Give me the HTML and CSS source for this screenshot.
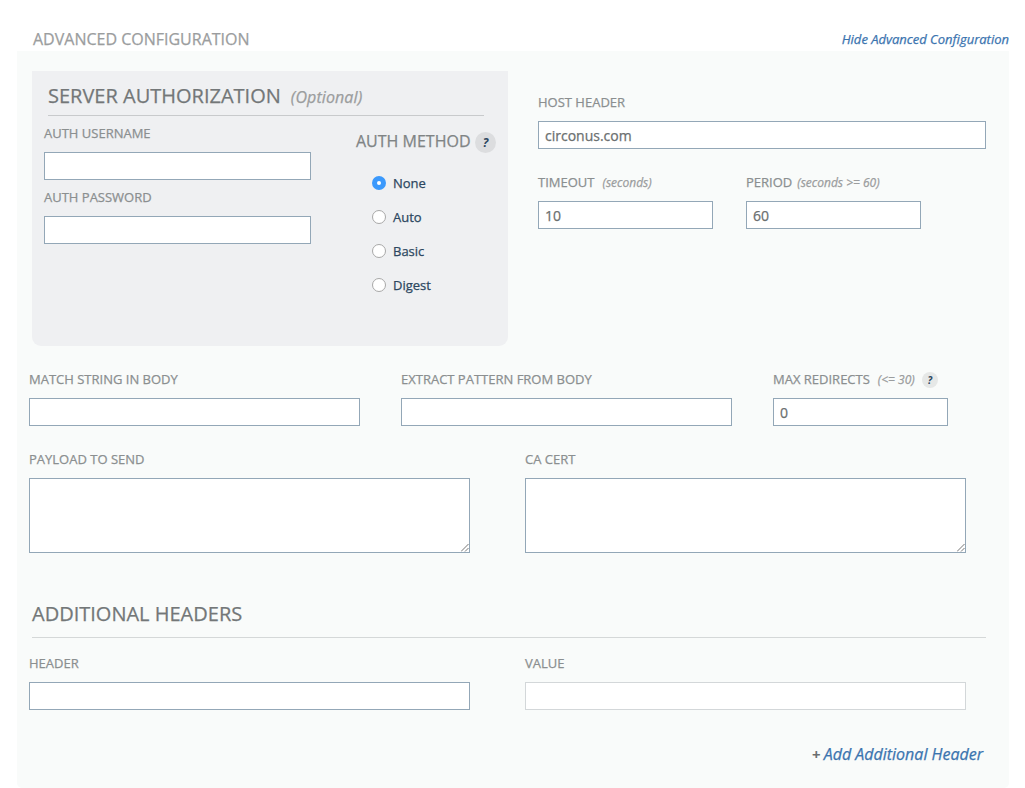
FILE: index.html
```html
<!DOCTYPE html>
<html lang="en">
<head>
<meta charset="utf-8">
<title>Advanced Configuration</title>
<link rel="stylesheet" href="styles.css">
</head>
<body>
<header class="topbar">
  <h1 class="title">ADVANCED CONFIGURATION</h1>
  <a class="hide-link">Hide Advanced Configuration</a>
</header>
<main class="panel">
  <section class="upper">
    <div class="auth-card">
      <h2 class="auth-heading"><span>SERVER AUTHORIZATION</span><em class="optional">(Optional)</em></h2>
      <div class="auth-body">
        <div class="credentials">
          <div class="field"><label class="label">AUTH USERNAME</label><input class="input" type="text"></div>
          <div class="field"><label class="label">AUTH PASSWORD</label><input class="input" type="text"></div>
        </div>
        <div class="method">
          <div class="method-heading"><span class="method-title">AUTH METHOD</span><span class="help">?</span></div>
          <div class="radios">
            <label class="option"><span class="radio radio-on"></span>None</label>
            <label class="option"><span class="radio"></span>Auto</label>
            <label class="option"><span class="radio"></span>Basic</label>
            <label class="option"><span class="radio"></span>Digest</label>
          </div>
        </div>
      </div>
    </div>
    <div class="host">
      <div class="field"><label class="label">HOST HEADER</label><input class="input" type="text" value="circonus.com"></div>
      <div class="host-row">
        <div class="field"><label class="label">TIMEOUT<em class="hint hint-wide">(seconds)</em></label><input class="input" type="text" value="10"></div>
        <div class="field"><label class="label">PERIOD<em class="hint">(seconds &gt;= 60)</em></label><input class="input" type="text" value="60"></div>
      </div>
    </div>
  </section>
  <section class="match-row">
    <div class="field"><label class="label">MATCH STRING IN BODY</label><input class="input" type="text"></div>
    <div class="field"><label class="label">EXTRACT PATTERN FROM BODY</label><input class="input" type="text"></div>
    <div class="field"><label class="label">MAX REDIRECTS<em class="hint hint-wide">(&lt;= 30)</em><span class="help help-small">?</span></label><input class="input" type="text" value="0"></div>
  </section>
  <section class="two-col payload">
    <div class="field"><label class="label">PAYLOAD TO SEND</label>
      <div class="area-wrap"><textarea class="input area"></textarea><svg class="grip" width="8" height="8" viewBox="0 0 8 8"><path d="M0 7.5L7.5 0M4 7.5L7.5 4"/></svg></div>
    </div>
    <div class="field"><label class="label">CA CERT</label>
      <div class="area-wrap"><textarea class="input area"></textarea><svg class="grip" width="8" height="8" viewBox="0 0 8 8"><path d="M0 7.5L7.5 0M4 7.5L7.5 4"/></svg></div>
    </div>
  </section>
  <h2 class="headers-heading">ADDITIONAL HEADERS</h2>
  <section class="two-col">
    <div class="field"><label class="label">HEADER</label><input class="input" type="text"></div>
    <div class="field"><label class="label">VALUE</label><input class="input input-pale" type="text"></div>
  </section>
  <div class="add-row"><span class="plus">+</span><a class="add-link">Add Additional Header</a></div>
</main>
</body>
</html>
```
FILE: styles.css
```css
* { box-sizing: border-box; }
body {
  margin: 0;
  background: #fff;
  color: #8b8f90;
  font-family: "Open Sans", sans-serif;
  font-size: 13px;
  white-space: nowrap;
  -webkit-text-stroke: 0.25px currentColor;
}
h1, h2 { margin: 0; font-weight: 400; }
.topbar {
  display: flex;
  justify-content: space-between;
  height: 51px;
  padding: 28px 16px 0 33px;
}
.title { font-size: 16px; line-height: 22px; color: #9b9d9e; }
.hide-link { font-size: 13px; line-height: 22px; font-style: italic; color: #3b74af; }
.panel {
  width: 992px;
  height: 737px;
  margin-left: 17px;
  padding: 20px 23px 0 12px;
  background: #f9fbfa;
  border-radius: 0 0 5px 5px;
}
.upper { display: flex; gap: 30px; padding-left: 3px; }
.auth-card {
  width: 476px;
  height: 275px;
  padding: 0 12px;
  background: #eff0f2;
  border-radius: 0 0 9px 9px;
}
.auth-heading {
  display: flex;
  align-items: baseline;
  height: 45px;
  width: 436px;
  margin-left: 4px;
  padding-top: 10px;
  font-size: 20px;
  line-height: 30px;
  color: #737778;
  border-bottom: 1px solid #c8cacc;
}
.optional { margin-left: 10px; font-size: 16px; letter-spacing: 0.1px; color: #9b9d9e; }
.auth-body { display: flex; justify-content: space-between; padding-top: 7px; }
.credentials { display: grid; gap: 7px; width: 267px; align-content: start; }
.label { display: flex; align-items: center; height: 20px; margin-bottom: 9px; font-size: 13px; line-height: 20px; }
.input {
  display: block;
  width: 100%;
  height: 28px;
  margin: 0;
  padding: 1px 6px 0;
  border: 1px solid #93a7b7;
  border-radius: 0;
  background: #fff;
  color: #6b6f70;
  font: 14px/20px "Open Sans", sans-serif;
  outline: 0;
}
.input-pale { border-color: #d3d7d9; }
.hint { margin: 1px 0 0 5px; font-size: 12px; color: #9b9d9e; }
.hint-wide { margin-left: 8px; }
.method { width: 140px; padding-top: 9px; }
.method-heading { display: flex; align-items: center; justify-content: space-between; height: 21px; font-size: 16px; color: #808485; }
.method-title { padding-bottom: 3px; }
.help {
  display: flex;
  align-items: center;
  justify-content: center;
  width: 21px;
  height: 21px;
  border-radius: 50%;
  background: #dcdddf;
  color: #2c4760;
  font-size: 12px;
  font-weight: 700;
  font-style: italic;
  -webkit-text-stroke: 0;
}
.help-small { width: 16px; height: 16px; margin: 2px 0 0 7px; font-size: 10px; background: #e6e8e7; }
.radios { display: grid; gap: 14px; padding: 20px 0 0 16px; }
.option { display: flex; align-items: center; gap: 7px; height: 20px; color: #2c4760; }
.radio { width: 14px; height: 14px; border: 1px solid #a8a8a8; border-radius: 50%; background: #fff; }
.radio-on { border: 5px solid #3b99fc; }
.host { width: 448px; padding-top: 21px; }
.host-row { display: grid; grid-template-columns: 175px 175px; gap: 33px; margin-top: 23px; }
.match-row { display: grid; grid-template-columns: 331px 331px 175px; gap: 41px; margin-top: 23px; }
.two-col { display: grid; grid-template-columns: 441px 441px; gap: 55px; }
.payload { margin-top: 23px; }
.area-wrap { position: relative; }
.area { height: 75px; resize: none; }
.grip { position: absolute; right: 1px; bottom: 1px; fill: none; stroke: #666; stroke-width: 0.9; }
.headers-heading {
  width: 954px;
  height: 85px;
  margin: 0 0 15px 3px;
  padding-top: 46px;
  font-size: 20px;
  line-height: 30px;
  color: #737778;
  border-bottom: 1px solid #d5d8d8;
}
.add-row { display: flex; justify-content: flex-end; padding: 32px 3px 0 0; font-size: 16px; line-height: 24px; }
.plus { margin-right: 3px; font-size: 15px; font-weight: 700; color: #6b6f70; -webkit-text-stroke: 0; }
.add-link { font-style: italic; color: #3b74af; }
```
